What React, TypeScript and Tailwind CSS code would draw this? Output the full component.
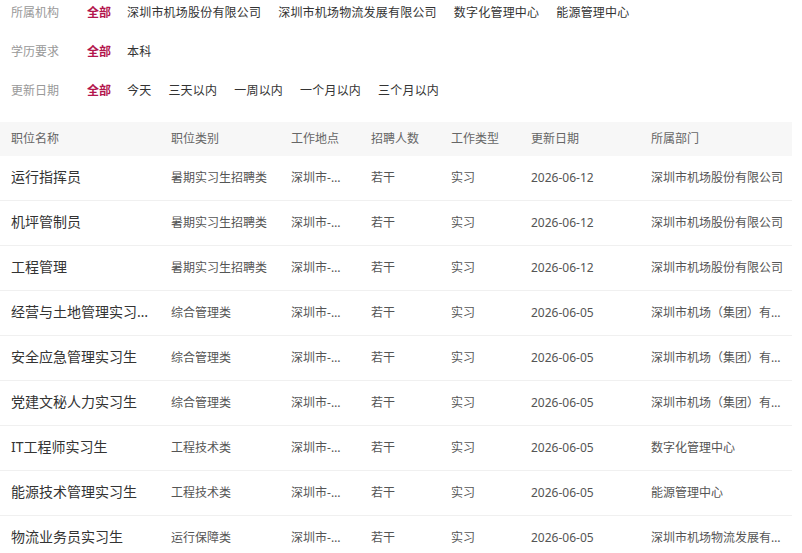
import React from "react";

// 筛选条件
const filters = [
  {
    label: "所属机构",
    options: ["深圳市机场股份有限公司", "深圳市机场物流发展有限公司", "数字化管理中心", "能源管理中心"],
  },
  { label: "学历要求", options: ["本科"] },
  { label: "更新日期", options: ["今天", "三天以内", "一周以内", "一个月以内", "三个月以内"] },
];

const jobs = [
  ["运行指挥员", "暑期实习生招聘类", "2026-06-12", "深圳市机场股份有限公司"],
  ["机坪管制员", "暑期实习生招聘类", "2026-06-12", "深圳市机场股份有限公司"],
  ["工程管理", "暑期实习生招聘类", "2026-06-12", "深圳市机场股份有限公司"],
  ["经营与土地管理实习生", "综合管理类", "2026-06-05", "深圳市机场（集团）有限公司"],
  ["安全应急管理实习生", "综合管理类", "2026-06-05", "深圳市机场（集团）有限公司"],
  ["党建文秘人力实习生", "综合管理类", "2026-06-05", "深圳市机场（集团）有限公司"],
  ["IT工程师实习生", "工程技术类", "2026-06-05", "数字化管理中心"],
  ["能源技术管理实习生", "工程技术类", "2026-06-05", "能源管理中心"],
  ["物流业务员实习生", "运行保障类", "2026-06-05", "深圳市机场物流发展有限公司"],
];

export default function App() {
  return (
    <div
      className="w-[802px] h-[553px] overflow-hidden bg-white"
      style={{ fontFamily: '"Noto Sans", "Noto Sans CJK SC", sans-serif' }}
    >
      {/* Filters */}
      <div className="-mt-[7px] flex flex-col">
        {filters.map((f) => (
          <div key={f.label} className="h-[39px] flex items-center pl-[11px] text-[12px] leading-none">
            <span className="w-[76px] text-[#999]">{f.label}</span>
            <div className="flex gap-[17px]">
              <span className="font-bold text-[#b3164d] -mr-[1px]">全部</span>
              {f.options.map((o) => (
                <span key={o} className="text-[#333] tracking-[0.2px]">
                  {o}
                </span>
              ))}
            </div>
          </div>
        ))}
      </div>

      {/* Table */}
      <div className="mt-[12px] w-[792px]">
        <div className="h-[34px] bg-[#f7f7f7] flex items-center text-[12px] text-[#666]">
          <div className="w-[160px] pl-[11px]">职位名称</div>
          <div className="w-[120px] pl-[11px]">职位类别</div>
          <div className="w-[80px] pl-[11px]">工作地点</div>
          <div className="w-[80px] pl-[11px]">招聘人数</div>
          <div className="w-[80px] pl-[11px]">工作类型</div>
          <div className="w-[120px] pl-[11px]">更新日期</div>
          <div className="flex-1 pl-[11px]">所属部门</div>
        </div>
        {jobs.map((j, i) => (
          <div key={i} className="h-[45px] flex items-center border-b border-[#f0f0f0] text-[12px] text-[#555]">
            <div className="w-[160px] pl-[11px] pr-[11px] pb-[3px] truncate text-[14px] text-[#333]">{j[0]}</div>
            <div className="w-[120px] pl-[11px] truncate">{j[1]}</div>
            <div className="w-[80px] pl-[11px] pr-[11px] truncate">深圳市-宝安区</div>
            <div className="w-[80px] pl-[11px]">若干</div>
            <div className="w-[80px] pl-[11px]">实习</div>
            <div className="w-[120px] pl-[11px]">{j[2]}</div>
            <div className="flex-1 min-w-0 pl-[11px] truncate">{j[3]}</div>
          </div>
        ))}
      </div>
    </div>
  );
}
